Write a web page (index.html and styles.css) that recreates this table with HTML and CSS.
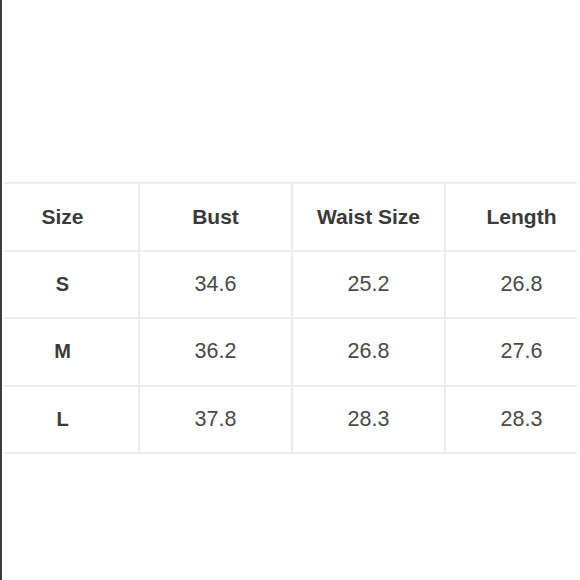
FILE: index.html
```html
<!DOCTYPE html>
<html>
<head>
<meta charset="utf-8">
<link rel="stylesheet" href="styles.css">
</head>
<body>
<div class="page">
  <div class="table-clip">
    <div class="size-table">
      <div class="cell head">Size</div>
      <div class="cell head">Bust</div>
      <div class="cell head">Waist Size</div>
      <div class="cell head">Length</div>
      <div class="cell label">S</div>
      <div class="cell">34.6</div>
      <div class="cell">25.2</div>
      <div class="cell">26.8</div>
      <div class="cell label">M</div>
      <div class="cell">36.2</div>
      <div class="cell">26.8</div>
      <div class="cell">27.6</div>
      <div class="cell label">L</div>
      <div class="cell">37.8</div>
      <div class="cell">28.3</div>
      <div class="cell">28.3</div>
    </div>
  </div>
</div>
</body>
</html>
```

FILE: styles.css
```css
html, body {
  margin: 0;
  padding: 0;
  background: #ffffff;
}

.page {
  width: 578px;
  height: 580px;
  border-left: 2px solid #3c3c3c;
  padding-top: 182px;
  box-sizing: border-box;
}

.table-clip {
  margin-left: 2px;
  width: 573px;
  overflow: hidden;
}

.size-table {
  margin-left: -19px;
  width: 612px;
  display: grid;
  grid-template-columns: repeat(4, 153px);
  grid-auto-rows: 67.5px;
  border-bottom: 2px solid #ececec;
  font-family: "Liberation Sans", Arial, sans-serif;
  font-size: 21.5px;
  color: #4a4a4a;
}

.cell {
  box-sizing: border-box;
  border-top: 2px solid #ececec;
  border-left: 2px solid #ececec;
  display: flex;
  align-items: center;
  justify-content: center;
}

.head {
  font-weight: bold;
  color: #3a3a3a;
  font-size: 21px;
}

.label {
  font-weight: bold;
  color: #3a3a3a;
  font-size: 20px;
}
```
